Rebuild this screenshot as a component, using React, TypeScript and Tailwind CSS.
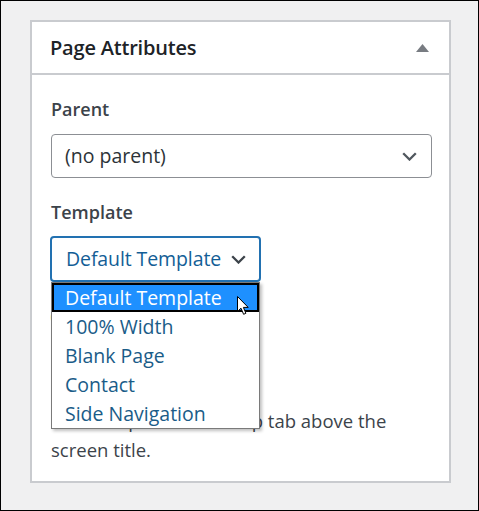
const options = ["Default Template", "100% Width", "Blank Page", "Contact", "Side Navigation"];

const Chevron = ({ color }: { color: string }) => (
  <svg width="15" height="9" viewBox="0 0 15 9">
    <polyline points="1.2,1.2 7.5,7.5 13.8,1.2" fill="none" stroke={color} strokeWidth="2.3" />
  </svg>
);

const Cursor = () => (
  <svg width="13" height="20" viewBox="0 0 13 20" className="absolute left-[183px] top-[11px]">
    <path
      d="M0.5 0.5 L0.5 15.5 L4 12.2 L6.6 18.3 L8.9 17.3 L6.4 11.4 L11.2 11.4 Z"
      fill="white"
      stroke="black"
      strokeWidth="1"
      strokeLinejoin="round"
    />
  </svg>
);

const App = () => {
  return (
    <div
      className="w-[479px] h-[511px] bg-[#f0f0f1] border border-black pl-[29px] pt-[19px]"
      style={{ fontFamily: '"Open Sans", "Noto Sans", sans-serif' }}
    >
      <div className="w-[421px] h-[463px] bg-white border-2 border-[#c9cbcf]">
        {/* Header */}
        <div className="h-[53px] flex items-center justify-between pl-[18px] pr-[20px] border-b-2 border-[#c9cbcf]">
          <h2 className="text-[20px] font-semibold text-[#1d2327] tracking-[-0.2px]">Page Attributes</h2>
          <svg width="13" height="8" viewBox="0 0 13 8" className="mt-[1px]">
            <path d="M6.5 0 L13 8 L0 8 Z" fill="#787c82" />
          </svg>
        </div>

        {/* Body */}
        <div className="pl-[19px] pr-[16px] pt-[22px]">
          <p className="text-[18px] font-semibold text-[#3c434a] leading-[24px]">Parent</p>
          <div className="mt-[13px] h-[44px] w-[381px] border border-[#8c8f94] rounded-[4px] flex items-center justify-between pl-[13px] pr-[14px]">
            <span className="text-[19.5px] text-[#2c3338]">(no parent)</span>
            <Chevron color="#50575e" />
          </div>

          <p className="mt-[22px] text-[18px] font-semibold text-[#3c434a] leading-[24px]">Template</p>

          <div className="relative mt-[12px] -ml-[1px] w-[211px]">
            <div className="h-[46px] border-2 border-[#2271b1] rounded-[4px] flex items-center justify-between pl-[14px] pr-[13px]">
              <span className="text-[19.5px] text-[#135e96] tracking-[-0.1px]">Default Template</span>
              <Chevron color="#3c434a" />
            </div>

            {/* hidden content under the list */}
            <p className="mt-[20px] text-[18.5px] leading-[29px] text-[#b26200]">Order</p>

            {/* Dropdown list */}
            <div className="absolute left-[1px] top-[46px] w-[209px] bg-white border border-[#7a7a7a] shadow-[2px_2px_3px_rgba(0,0,0,0.25)] z-10">
              {options.map((o, i) => (
                <div
                  key={o}
                  className={
                    i === 0
                      ? "relative h-[29px] flex items-center pl-[11px] bg-[#1e90ff] text-white border-2 border-black text-[19.5px] leading-none"
                      : "h-[29px] flex items-center pl-[13px] text-[#1a5c88] text-[19.5px] leading-none"
                  }
                >
                  {o}
                  {i === 0 && <Cursor />}
                </div>
              ))}
            </div>
          </div>

          <p className="mt-[75px] text-[18.5px] text-[#3c434a] leading-[29px] w-[381px]">
            Need help? Use the Help tab above the screen title.
          </p>
        </div>
      </div>
    </div>
  );
};

export default App;
